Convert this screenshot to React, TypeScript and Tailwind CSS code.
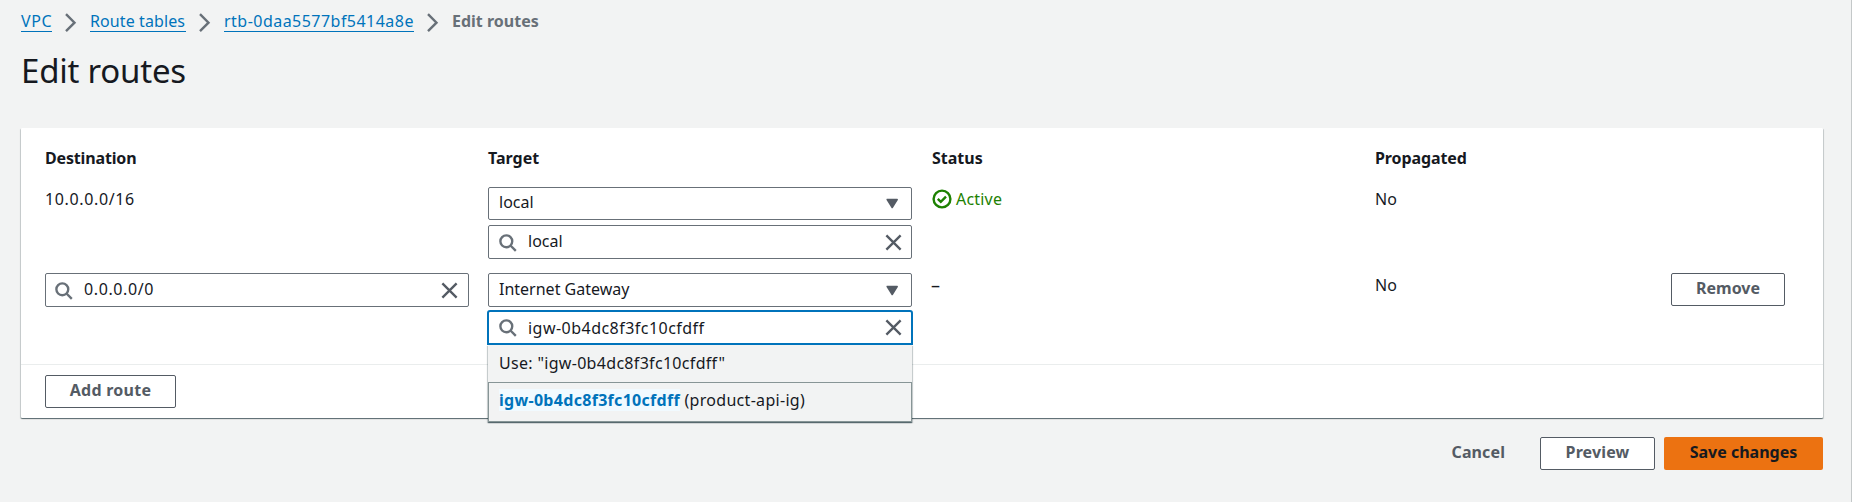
import React from "react";

function Chevron() {
  return (
    <svg width="12" height="20" viewBox="0 0 12 20" fill="none" stroke="#687078" strokeWidth="2.4" className="mt-[13px] shrink-0">
      <path d="M1 1.2 L9.5 9.7 L1 18.2" />
    </svg>
  );
}

function SearchIcon() {
  return (
    <svg width="19" height="19" viewBox="0 0 16 16" fill="none" stroke="#687078" strokeWidth="2" className="shrink-0">
      <circle cx="7" cy="7" r="5" />
      <path d="M15 15l-4.5-4.5" />
    </svg>
  );
}

function CloseIcon() {
  return (
    <svg width="19" height="19" viewBox="0 0 16 16" fill="none" stroke="#545b64" strokeWidth="2" className="shrink-0">
      <path d="M2 2l12 12M14 2L2 14" />
    </svg>
  );
}

function Caret() {
  return (
    <svg width="13" height="11" viewBox="0 0 13 11" fill="#545b64" stroke="#545b64" strokeWidth="1.5" strokeLinejoin="round" className="shrink-0">
      <path d="M1.2 1.5h10L6.2 9.5z" />
    </svg>
  );
}

function CheckIcon() {
  return (
    <svg width="20" height="20" viewBox="0 0 20 20" fill="none" stroke="#1d8102" strokeWidth="2.4" className="shrink-0">
      <circle cx="10" cy="10" r="8.4" />
      <path d="M5.8 9.8l3 3 5.2-5.2" />
    </svg>
  );
}

export default function App() {
  return (
    <div className="flex h-[502px] w-[1864px] overflow-hidden bg-white font-['Noto_Sans',sans-serif] text-[16px] whitespace-nowrap text-[#16191f]">
      <div className="w-[1852px] shrink-0 border-r border-[#c4c8c9] bg-[#f2f3f3] pl-[21px]">
        <nav className="flex h-[45px] text-[#0073bb]">
          <span className="mt-[10px] mr-[13px] h-[22px] w-[31px] border-b border-[#0073bb] leading-[23px] tracking-[0.6px]">VPC</span>
          <Chevron />
          <span className="mt-[10px] mr-[13px] ml-[13px] h-[22px] w-[96px] border-b border-[#0073bb] leading-[23px] tracking-[0.1px]">Route tables</span>
          <Chevron />
          <span className="mt-[10px] mr-[13px] ml-[13px] h-[22px] w-[190px] border-b border-[#0073bb] leading-[23px] tracking-[0.47px]">rtb-0daa5577bf5414a8e</span>
          <Chevron />
          <span className="mt-[10px] ml-[13px] h-[22px] leading-[23px] font-bold text-[#687078]">Edit routes</span>
        </nav>
        <h1 className="h-[83px] pt-[4px] text-[33px] leading-[44px] tracking-[-0.22px]">Edit routes</h1>

        <section className="flex h-[290px] w-[1802px] flex-col rounded-[1px] bg-white shadow-[0_1px_1px_0_rgba(0,28,36,0.5),1px_1px_1px_0_rgba(0,28,36,0.15),-1px_1px_1px_0_rgba(0,28,36,0.15)]">
          <div className="grid h-[237px] grid-cols-[443px_443px_444px_296px_114px] grid-rows-[59px_86px_91px] border-b border-[#eaeded] pl-[24px]">
            <div className="pt-[19px] leading-[22px] font-bold tracking-[-0.16px]">Destination</div>
            <div className="pt-[19px] leading-[22px] font-bold">Target</div>
            <div className="pt-[19px] pl-[1px] leading-[22px] font-bold">Status</div>
            <div className="pt-[19px] leading-[22px] font-bold tracking-[-0.1px]">Propagated</div>
            <div />

            <div className="pt-[1px] leading-[22px] tracking-[0.63px]">10.0.0.0/16</div>
            <div className="flex flex-col gap-[5px]">
              <div className="flex h-[33px] w-[424px] items-center justify-between rounded-[2px] border border-[#687078] bg-white pr-[12px] pl-[10px]">
                <span className="-mt-[3px] leading-[22px]">local</span>
                <Caret />
              </div>
              <div className="flex h-[34px] w-[424px] items-center rounded-[2px] border border-[#687078] bg-white pr-[8px] pl-[9px]">
                <SearchIcon />
                <span className="-mt-[2px] ml-[11px] flex-1 leading-[22px]">local</span>
                <CloseIcon />
              </div>
            </div>
            <div className="flex h-[24px] items-center gap-[4px] pl-[1px] text-[#1d8102]">
              <CheckIcon />
              <span className="-mt-px leading-[22px] tracking-[0.2px]">Active</span>
            </div>
            <div className="pt-[1px] leading-[22px]">No</div>
            <div />

            <div>
              <div className="flex h-[34px] w-[424px] items-center rounded-[2px] border border-[#687078] bg-white pr-[9px] pl-[8px]">
                <SearchIcon />
                <span className="-mt-[2px] ml-[11px] flex-1 leading-[22px] tracking-[0.6px]">0.0.0.0/0</span>
                <CloseIcon />
              </div>
            </div>
            <div>
              <div className="flex h-[34px] w-[424px] items-center justify-between rounded-[2px] border border-[#687078] bg-white pr-[12px] pl-[10px]">
                <span className="-mt-[2px] leading-[22px]">Internet Gateway</span>
                <Caret />
              </div>
              <div className="relative mt-[3px] -ml-px h-[35px] w-[426px]">
                <div className="flex h-[35px] w-[426px] items-center rounded-t-[3px] border-2 border-[#0073bb] bg-white pr-[8px] pl-[9px]">
                  <SearchIcon />
                  <span className="ml-[11px] flex-1 leading-[22px] tracking-[0.47px]">igw-0b4dc8f3fc10cfdff</span>
                  <CloseIcon />
                </div>
                <div className="absolute top-[35px] left-px z-10 w-[424px] bg-[#f2f3f3] shadow-[0_1px_1px_0_rgba(0,28,36,0.5),1px_1px_1px_0_rgba(0,28,36,0.15),-1px_1px_1px_0_rgba(0,28,36,0.15)]">
                  <div className="h-[37px] pt-[7px] pl-[11px] leading-[22px] tracking-[0.31px]">Use: "igw-0b4dc8f3fc10cfdff"</div>
                  <div className="h-[40px] border border-[#879596] pt-[6px] pl-[10px] leading-[22px] tracking-[0.3px]">
                    <span className="bg-[#f1faff] font-bold text-[#0073bb]">igw-0b4dc8f3fc10cfdff</span>
                    <span> (product-api-ig)</span>
                  </div>
                </div>
              </div>
            </div>
            <div className="pt-[1px] text-[18px] leading-[22px]">–</div>
            <div className="pt-[1px] leading-[22px]">No</div>
            <div>
              <button className="h-[33px] w-[114px] rounded-[2px] border border-[#545b64] pb-[3px] leading-[22px] font-bold text-[#545b64]">Remove</button>
            </div>
          </div>
          <div className="pt-[10px] pl-[24px]">
            <button className="h-[33px] w-[131px] rounded-[2px] border border-[#545b64] pb-[3px] leading-[22px] font-bold tracking-[0.25px] text-[#545b64]">Add route</button>
          </div>
        </section>

        <div className="mt-[19px] flex w-[1802px] justify-end">
          <button className="mr-[35px] h-[33px] pb-[3px] leading-[22px] font-bold tracking-[0.1px] text-[#545b64]">Cancel</button>
          <button className="mr-[9px] h-[33px] w-[115px] rounded-[2px] border border-[#545b64] bg-white pb-[3px] leading-[22px] font-bold tracking-[0.15px] text-[#545b64]">Preview</button>
          <button className="h-[33px] w-[159px] rounded-[2px] bg-[#ec7211] pb-[3px] leading-[22px] font-bold text-[#16191f]">Save changes</button>
        </div>
      </div>
    </div>
  );
}
